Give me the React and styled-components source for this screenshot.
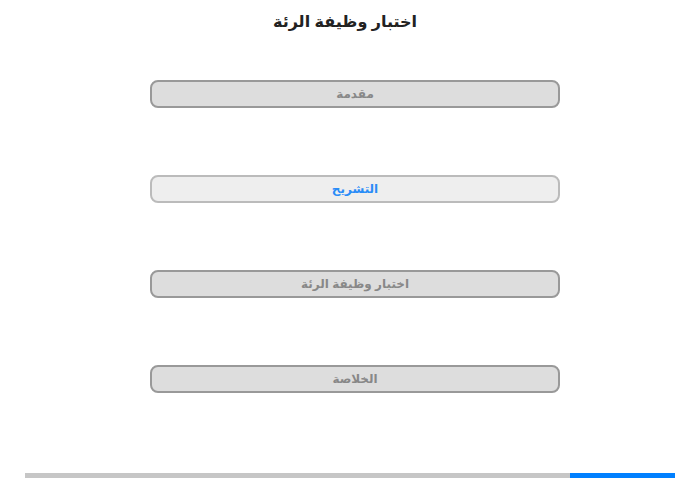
import React from 'react';
import styled, { createGlobalStyle } from 'styled-components';

const GlobalStyle = createGlobalStyle`
  html, body {
    margin: 0;
    padding: 0;
    background: #fff;
  }
  body {
    font-family: "Liberation Sans", "DejaVu Sans", Arial, sans-serif;
  }
`;

const Page = styled.div`
  width: 700px;
  height: 480px;
  display: flex;
  flex-direction: column;
  align-items: center;
  direction: rtl;
  overflow: hidden;
`;

const Title = styled.h1`
  margin: 12px 0 0 -10px;
  font-size: 16px;
  line-height: 20px;
  font-weight: bold;
  color: #222;
`;

const Menu = styled.div`
  margin: 48px 0 0 10px;
  display: flex;
  flex-direction: column;
  gap: 67px;
`;

const Step = styled.div`
  box-sizing: border-box;
  width: 410px;
  height: 28px;
  border-radius: 8px;
  border: 2px solid ${p => (p.$active ? '#bbb' : '#999')};
  background: ${p => (p.$active ? '#eee' : '#ddd')};
  color: ${p => (p.$active ? '#2a8cf7' : '#888')};
  font-size: 12px;
  font-weight: bold;
  display: flex;
  align-items: center;
  justify-content: center;
`;

const Progress = styled.div`
  margin-top: auto;
  margin-bottom: 2px;
  width: 650px;
  height: 5px;
  background: #c6c6c6;
  display: flex;
`;

const Fill = styled.div`
  height: 100%;
  background: #0080ff;
`;

const steps = ['مقدمة', 'التشريح', 'اختبار وظيفة الرئة', 'الخلاصة'];

export default function App() {
  return (
    <Page>
      <GlobalStyle />
      <Title>اختبار وظيفة الرئة</Title>
      <Menu>
        {steps.map((s, i) => (
          <Step key={s} $active={i === 1}>{s}</Step>
        ))}
      </Menu>
      <Progress>
        <Fill style={{ width: `${(105 / 650) * 100}%` }} />
      </Progress>
    </Page>
  );
}
